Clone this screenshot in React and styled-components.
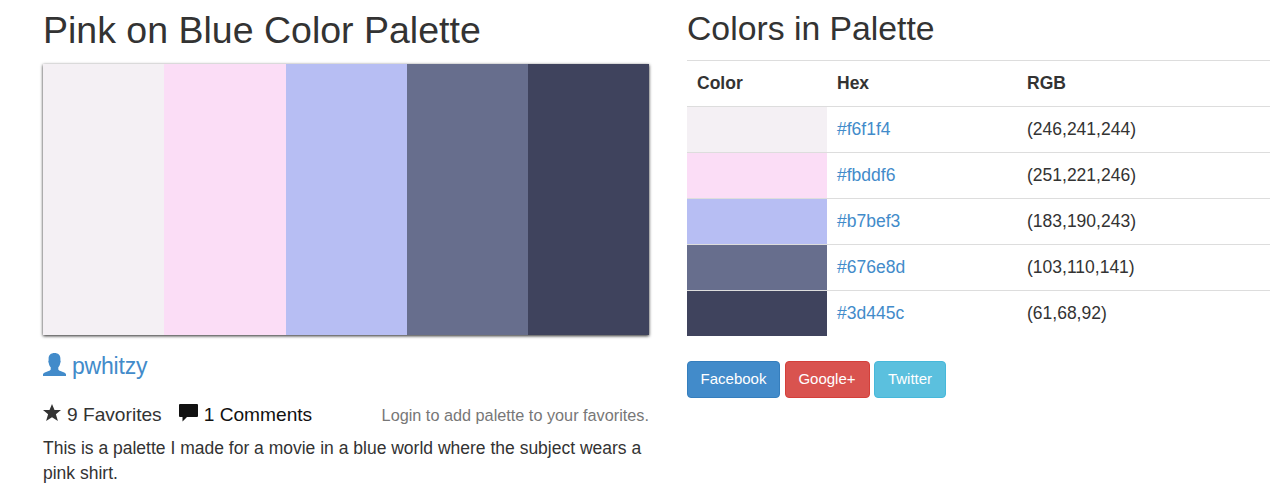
import React from "react";
import styled, { createGlobalStyle } from "styled-components";

const GlobalStyle = createGlobalStyle`
  * { box-sizing: border-box; }
  body {
    margin: 0;
    background: #fff;
    color: #333;
    font: 17.5px/25px "Liberation Sans", Arial, sans-serif;
    overflow: hidden;
  }
`;

const Page = styled.main`
  display: grid;
  grid-template-columns: 606.25px 583px;
  column-gap: 37.75px;
  padding-left: 43px;
  height: 491px;
  overflow: hidden;
`;

const Column = styled.section`
  min-width: 0;
`;

const Title = styled.h1`
  margin: 9px 0 13px;
  font-size: 37.5px;
  line-height: 42px;
  font-weight: 400;
`;

const SideTitle = styled.h2`
  margin: 9px 0 13px;
  font-size: 33.75px;
  line-height: 38px;
  font-weight: 400;
`;

const Swatches = styled.div`
  display: flex;
  height: 271px;
  box-shadow: 0 1px 3px rgba(0, 0, 0, 0.85);
`;

const Swatch = styled.div`
  flex: 1;
  background: ${(p) => p.$color};
`;

const Author = styled.a`
  display: flex;
  align-items: center;
  gap: 6px;
  margin-top: 18px;
  height: 27px;
  color: #428bca;
  font-size: 23px;
  letter-spacing: -0.2px;
  line-height: 27px;

  svg {
    margin-top: -4px;
  }
`;

const Meta = styled.div`
  display: flex;
  align-items: center;
  height: 25px;
  margin-top: 22px;
  font-size: 19.15px;
`;

const Stat = styled.span`
  display: flex;
  align-items: center;
  gap: 6px;
  margin-right: 17px;
  color: ${(p) => p.$color};

  svg {
    margin-top: -4px;
  }
`;

const LoginHint = styled.span`
  margin-left: auto;
  margin-right: 0.25px;
  padding-top: 2px;
  color: #777;
  font-size: 16.25px;
`;

const Description = styled.p`
  margin: 9px 0 0;
`;

const Table = styled.table`
  width: 100%;
  table-layout: fixed;
  border-collapse: collapse;

  th,
  td {
    height: 46px;
    padding: 10px;
    border-top: 1px solid #ddd;
    text-align: left;
  }

  tbody tr:last-child td {
    height: 45px;
    padding-bottom: 9px;
  }
`;

const HeadCell = styled.th`
  width: ${(p) => p.$width};
`;

const ColorCell = styled.td`
  background: ${(p) => p.$color};
`;

const HexLink = styled.a`
  color: #428bca;
`;

const Share = styled.div`
  display: flex;
  gap: 4.5px;
  margin-top: 25px;
`;

const ShareButton = styled.button`
  width: ${(p) => p.$width}px;
  height: 37px;
  padding: 0 0 2px;
  border: 1px solid ${(p) => p.$border};
  border-radius: 4px;
  background: ${(p) => p.$color};
  color: #fff;
  font: 15px/21px "Liberation Sans", Arial, sans-serif;
`;

const UserIcon = () => (
  <svg width="23" height="23" viewBox="0 0 23 23" fill="currentColor">
    <path d="M11.5 0C7.800 0 5.600 2.200 5.600 5.500v2c-.4.4-.4 1.600.1 2.200.3 2 1 3.500 2 4.500v2c0 .7-.5 1.100-1.500 1.500L1.800 19.400C.6 19.900 0 20.600 0 21.600V23h23v-1.400c0-1-.6-1.700-1.800-2.200l-4.400-1.700c-1-.4-1.500-.8-1.500-1.500v-2c1-1 1.700-2.500 2-4.500.5-.6.5-1.800.1-2.200v-2C17.400 2.200 15.200 0 11.500 0Z" />
  </svg>
);

const StarIcon = () => (
  <svg width="18" height="17" viewBox="0 0 18 17" fill="currentColor">
    <path d="m9 0 2.500 6H18l-5.100 4.300 2 6.700L9 13.200 3.100 17l2-6.700L0 6h6.500Z" />
  </svg>
);

const CommentIcon = () => (
  <svg width="19" height="18" viewBox="0 0 19 18" fill="currentColor">
    <path d="M1 0h17q1 0 1 1v11q0 1-1 1H8l-4.500 4.500V13H1q-1 0-1-1V1q0-1 1-1Z" />
  </svg>
);

const colors = [
  { hex: "#f6f1f4", rgb: "(246,241,244)", paint: "#f4f0f4" },
  { hex: "#fbddf6", rgb: "(251,221,246)", paint: "#fbddf6" },
  { hex: "#b7bef3", rgb: "(183,190,243)", paint: "#b7bef3" },
  { hex: "#676e8d", rgb: "(103,110,141)", paint: "#676e8d" },
  { hex: "#3d445c", rgb: "(61,68,92)", paint: "#3f435d" },
];

const networks = [
  { name: "Facebook", color: "#428bca", border: "#357ebd", width: 93 },
  { name: "Google+", color: "#d9534f", border: "#d43f3a", width: 85 },
  { name: "Twitter", color: "#5bc0de", border: "#46b8da", width: 72 },
];

export default function App() {
  return (
    <>
      <GlobalStyle />
      <Page>
        <Column>
          <Title>Pink on Blue Color Palette</Title>
          <Swatches>
            {colors.map((c) => (
              <Swatch key={c.hex} $color={c.paint} />
            ))}
          </Swatches>
          <Author>
            <UserIcon />
            pwhitzy
          </Author>
          <Meta>
            <Stat $color="#333">
              <StarIcon />9 Favorites
            </Stat>
            <Stat $color="#111">
              <CommentIcon />1 Comments
            </Stat>
            <LoginHint>Login to add palette to your favorites.</LoginHint>
          </Meta>
          <Description>
            This is a palette I made for a movie in a blue world where the
            subject wears a pink shirt.
          </Description>
        </Column>
        <Column>
          <SideTitle>Colors in Palette</SideTitle>
          <Table>
            <thead>
              <tr>
                <HeadCell $width="140px">Color</HeadCell>
                <HeadCell $width="190px">Hex</HeadCell>
                <HeadCell $width="auto">RGB</HeadCell>
              </tr>
            </thead>
            <tbody>
              {colors.map((c) => (
                <tr key={c.hex}>
                  <ColorCell $color={c.paint} />
                  <td>
                    <HexLink>{c.hex}</HexLink>
                  </td>
                  <td>{c.rgb}</td>
                </tr>
              ))}
            </tbody>
          </Table>
          <Share>
            {networks.map((n) => (
              <ShareButton
                key={n.name}
                $color={n.color}
                $border={n.border}
                $width={n.width}
              >
                {n.name}
              </ShareButton>
            ))}
          </Share>
        </Column>
      </Page>
    </>
  );
}
